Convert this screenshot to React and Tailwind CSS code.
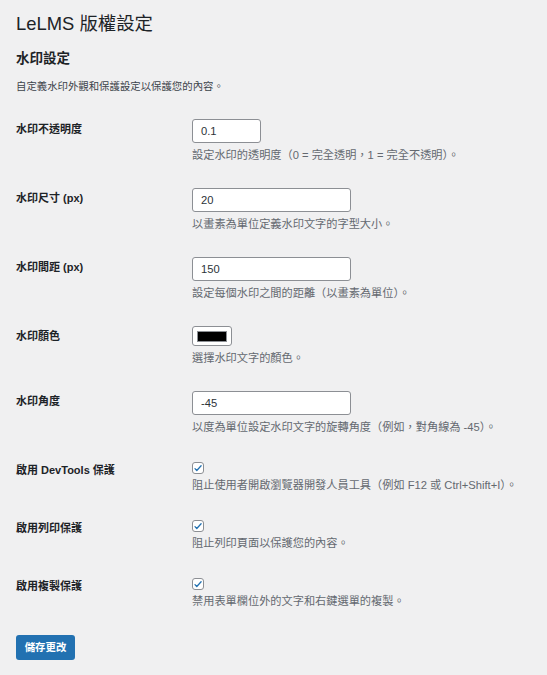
import React from "react";

const font = { fontFamily: '"Liberation Sans", "Noto Sans CJK TC", sans-serif' };

function Check() {
  return (
    <span className="mt-[1px] flex h-[12px] w-[12px] items-center justify-center rounded-[3px] border border-[#8c8f94] bg-white">
      <svg width="11" height="11" viewBox="0 0 20 20">
        <path d="M4 10.2l3.6 3.8L16.2 4.6" fill="none" stroke="#2271b1" strokeWidth="2.6" strokeLinecap="round" strokeLinejoin="round" />
      </svg>
    </span>
  );
}

function Row({ label, children, desc, check }) {
  return (
    <div className={`flex ${check ? "pb-[12px] pt-[13px]" : "py-[12px]"}`}>
      <div className={`w-[176px] shrink-0 text-[11px] font-bold leading-[16px] text-[#1d2327] ${check ? "pt-[1px]" : "pt-[2px]"}`}>
        {label}
      </div>
      <div className="flex flex-col items-start">
        {children}
        <p className={`text-[11.2px] leading-[17px] text-[#646970] ${check ? "mt-[3px]" : "mt-[4px]"}`}>{desc}</p>
      </div>
    </div>
  );
}

function TextInput({ value, w }) {
  return (
    <div className={`flex h-[24px] ${w} items-center rounded-[3px] border border-[#8c8f94] bg-white px-[8px] text-[11.2px] text-[#2c3338]`}>
      {value}
    </div>
  );
}

export default function App() {
  return (
    <div className="min-h-screen bg-[#f0f0f1] px-[16px] pt-[12px]" style={font}>
      <h1 className="text-[18.4px] font-normal leading-[23px] text-[#1d2327]">LeLMS 版權設定</h1>
      <h2 className="mt-[15px] text-[13.5px] font-bold leading-[17px] text-[#1d2327]">水印設定</h2>
      <p className="mt-[12px] text-[10.4px] leading-[16px] text-[#3c434a]">自定義水印外觀和保護設定以保護您的內容。</p>
      <div className="mt-[12px]">
        <Row label="水印不透明度" desc="設定水印的透明度（0 = 完全透明，1 = 完全不透明）。">
          <TextInput value="0.1" w="w-[69px]" />
        </Row>
        <Row label="水印尺寸 (px)" desc="以畫素為單位定義水印文字的字型大小。">
          <TextInput value="20" w="w-[159px]" />
        </Row>
        <Row label="水印間距 (px)" desc="設定每個水印之間的距離（以畫素為單位）。">
          <TextInput value="150" w="w-[159px]" />
        </Row>
        <Row label="水印顏色" desc="選擇水印文字的顏色。">
          <div className="flex h-[20px] w-[40px] items-center rounded-[3px] border border-[#8c8f94] bg-white px-[4px]">
            <div className="h-[11px] w-full border border-[#8c8f94] bg-black" />
          </div>
        </Row>
        <Row label="水印角度" desc="以度為單位設定水印文字的旋轉角度（例如，對角線為 -45）。">
          <TextInput value="-45" w="w-[159px]" />
        </Row>
        <Row check label="啟用 DevTools 保護" desc="阻止使用者開啟瀏覽器開發人員工具（例如 F12 或 Ctrl+Shift+I）。">
          <Check />
        </Row>
        <Row check label="啟用列印保護" desc="阻止列印頁面以保護您的內容。">
          <Check />
        </Row>
        <Row check label="啟用複製保護" desc="禁用表單欄位外的文字和右鍵選單的複製。">
          <Check />
        </Row>
      </div>
      <button className="mt-[13px] flex h-[25px] w-[59px] items-center justify-center rounded-[3px] bg-[#2271b1] text-[10.4px] font-bold text-white">
        儲存更改
      </button>
    </div>
  );
}
